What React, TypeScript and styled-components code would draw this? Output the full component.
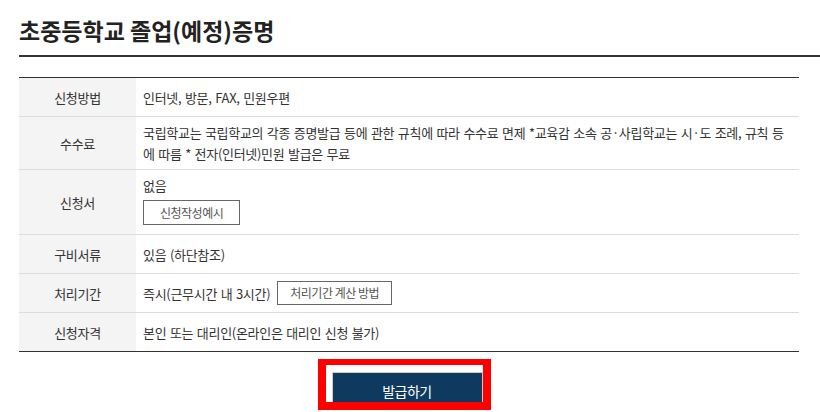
import styled, { createGlobalStyle } from "styled-components";

const GlobalStyle = createGlobalStyle`
  html, body {
    margin: 0;
    padding: 0;
    background: #fff;
  }
  body {
    font-family: "Noto Sans CJK KR", "Noto Sans", sans-serif;
    color: #333;
    overflow: hidden;
  }
`;

const Page = styled.div`
  width: 820px;
  height: 412px;
  padding-left: 19px;
  box-sizing: border-box;
  overflow: hidden;
`;

const Title = styled.h2`
  margin: 0;
  padding: 15px 0 10px;
  font-size: 23px;
  line-height: 30px;
  font-weight: 700;
  color: #222;
  border-bottom: 2px solid #333;
`;

const Table = styled.div`
  width: 780px;
  margin-top: 20px;
  border-top: 1px solid #333;
  border-bottom: 1px solid #333;
  font-size: 13px;
  letter-spacing: -0.3px;
  word-spacing: 1px;
`;

const Row = styled.div<{ $last?: boolean }>`
  display: grid;
  grid-template-columns: 117px 1fr;
  border-bottom: ${({ $last }) => ($last ? "none" : "1px solid #dcdcdc")};
`;

const Label = styled.div`
  display: flex;
  align-items: center;
  justify-content: center;
  background: #f4f4f4;
  color: #333;
  line-height: 21px;
`;

const Cell = styled.div`
  display: flex;
  flex-direction: column;
  justify-content: center;
  min-height: 38px;
  box-sizing: border-box;
  padding: 5px 8px 5px 7px;
  line-height: 21px;
  color: #333;
`;

const Inline = styled.div`
  display: flex;
  align-items: center;
  gap: 7px;
`;

const GhostButton = styled.button<{ $pad?: number }>`
  align-self: flex-start;
  height: 25px;
  margin: 4px 0 4px;
  padding: 0 ${({ $pad }) => $pad ?? 14}px;
  border: 1px solid #666;
  background: #fff;
  color: #555;
  font-family: inherit;
  font-size: 12px;
  letter-spacing: -0.5px;
  word-spacing: 0;
  line-height: 23px;
  cursor: pointer;
`;

const InlineButton = styled(GhostButton)`
  align-self: center;
  height: 24px;
  margin: -1px 0 0;
  line-height: 22px;
`;

const Actions = styled.div`
  width: 776px;
  display: flex;
  justify-content: center;
  margin-top: 20px;
`;

const SubmitWrap = styled.div`
  position: relative;
`;

const SubmitButton = styled.button`
  width: 151px;
  height: 38px;
  border: 1px solid #ccc;
  background: #0f3a60;
  color: #fff;
  font-family: inherit;
  font-size: 14px;
  letter-spacing: -0.5px;
  cursor: pointer;
`;

const Highlight = styled.div`
  position: absolute;
  top: -13px;
  left: -14px;
  width: 173px;
  height: 51px;
  box-sizing: border-box;
  border: 8px solid #ff0000;
  border-top-width: 6px;
  pointer-events: none;
`;

export default function App() {
  return (
    <Page>
      <GlobalStyle />
      <Title>초중등학교 졸업(예정)증명</Title>
      <Table>
        <Row>
          <Label>신청방법</Label>
          <Cell>인터넷, 방문, FAX, 민원우편</Cell>
        </Row>
        <Row>
          <Label>수수료</Label>
          <Cell>
            국립학교는 국립학교의 각종 증명발급 등에 관한 규칙에 따라 수수료 면제 *교육감 소속 공·사립학교는 시·도 조례, 규칙 등에 따름 * 전자(인터넷)민원 발급은 무료
          </Cell>
        </Row>
        <Row>
          <Label>신청서</Label>
          <Cell>
            <span>없음</span>
            <GhostButton $pad={16}>신청작성예시</GhostButton>
          </Cell>
        </Row>
        <Row>
          <Label>구비서류</Label>
          <Cell>있음 (하단참조)</Cell>
        </Row>
        <Row>
          <Label>처리기간</Label>
          <Cell>
            <Inline>
              <span>즉시(근무시간 내 3시간)</span>
              <InlineButton $pad={12}>처리기간 계산 방법</InlineButton>
            </Inline>
          </Cell>
        </Row>
        <Row $last>
          <Label>신청자격</Label>
          <Cell>본인 또는 대리인(온라인은 대리인 신청 불가)</Cell>
        </Row>
      </Table>
      <Actions>
        <SubmitWrap>
          <SubmitButton>발급하기</SubmitButton>
          <Highlight />
        </SubmitWrap>
      </Actions>
    </Page>
  );
}
